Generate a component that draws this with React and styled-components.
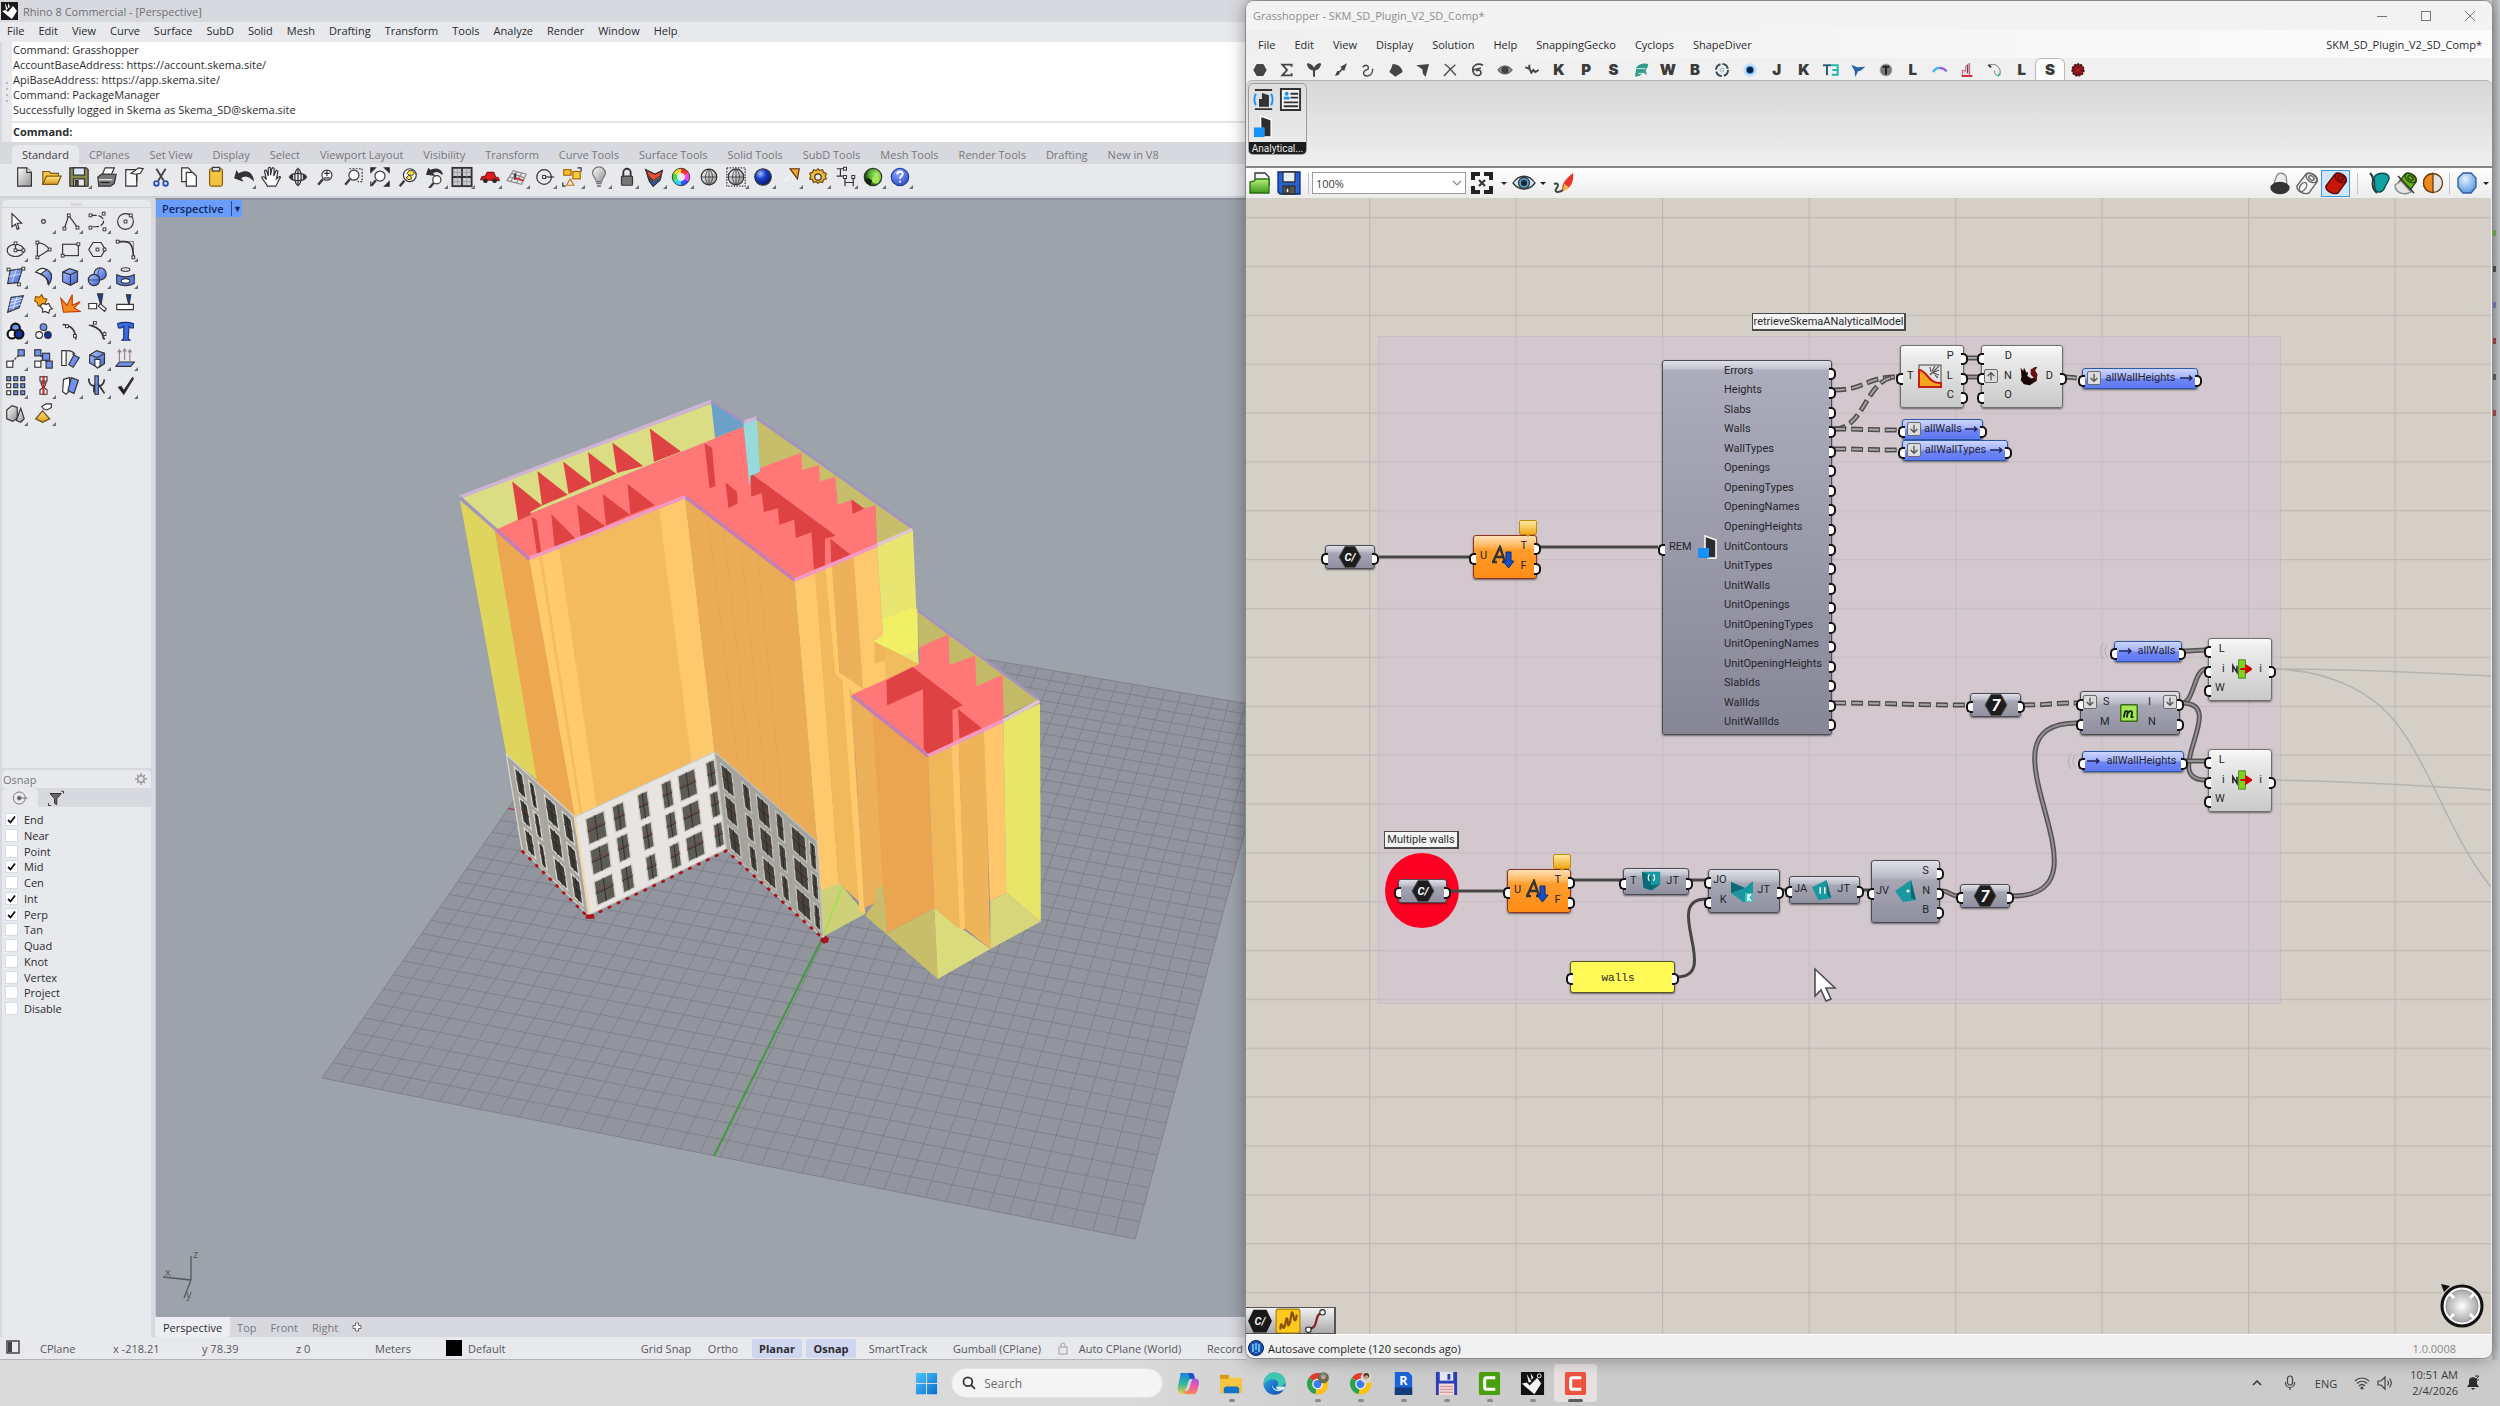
import React from "react";
import styled, { createGlobalStyle, css } from "styled-components";

const Page = createGlobalStyle`
  * { box-sizing: border-box; }
  body { margin: 0; overflow: hidden; }
  body, button, input, select {
    font-family: "Open Sans", "Noto Sans", sans-serif;
    font-size: 11px;
  }
  button { border: 0; padding: 0; background: none; color: inherit; white-space: nowrap; }
`;

/* ---------- shell ---------- */

const Screen = styled.div`
  height: 100vh;
  display: flex;
  flex-direction: column;
  background: #d6d6d8;
  color: #2b2b2e;
`;

const Desktop = styled.div`
  flex: 1;
  min-height: 0;
  display: flex;
`;

const BehindEdge = styled.div`
  width: 8px;
  background: linear-gradient(90deg, #aeb0b5, #c9cbd0);
  display: flex;
  flex-direction: column;
  align-items: flex-start;
  gap: 30px;
  padding-top: 230px;
`;

const EdgeChip = styled.i`
  width: 4px;
  height: 6px;
  background: ${p => p.$color};
`;

/* ---------- Rhino ---------- */

const Rhino = styled.section`
  flex: 1 1 0;
  min-width: 0;
  overflow: hidden;
  display: flex;
  flex-direction: column;
  background: #d8d9de;
  border-bottom: 1px solid #b4b5b9;
`;

const RhinoTitle = styled.header`
  height: 22px;
  display: flex;
  align-items: center;
  gap: 5px;
  padding-left: 1px;
  color: #6f7074;
`;

const MenuBar = styled.nav`
  display: flex;
  align-items: center;
  height: 20px;
  padding: 0 0 3px 7px;
  gap: 14px;
  background: #e8e9ed;
  flex: none;
`;

const Console = styled.div`
  flex: none;
  height: 100px;
  display: flex;
  background: #fff;
`;

const Grip = styled.div`
  width: 12px;
  flex: none;
  background: #e8e9ed;
  border-left: 2px solid #d8d9de;
  display: flex;
  flex-direction: column;
  align-items: center;
  justify-content: center;
  gap: 4px;

  i {
    width: 2px;
    height: 2px;
    background: #b9bac0;
  }
`;

const ConsoleBody = styled.div`
  flex: 1;
  display: flex;
  flex-direction: column;
`;

const History = styled.div`
  height: 81px;
  line-height: 15px;
  white-space: pre;
  border-bottom: 2px solid #e3e5ea;
  padding-left: 1px;
`;

const Prompt = styled.label`
  flex: 1;
  display: flex;
  align-items: center;
  gap: 6px;
  padding: 0 0 2px 1px;
  font-weight: 700;

  input {
    flex: 1;
    border: 0;
    outline: 0;
    background: none;
  }
`;

const TabStrip = styled.div`
  height: 22px;
  flex: none;
  display: flex;
  padding: 3px 0 0 12px;
  color: #77787d;
`;

const TabButton = styled.button`
  padding: 0 10px;
  border-radius: 5px 5px 0 0;
  ${p => p.$on && css`
    background: #e8e9ed;
    color: #3d3e42;
  `}
`;

const ToolStrip = styled.div`
  height: 34px;
  flex: none;
  background: #e8e9ed;
  border-bottom: 2px solid #cfd0d5;
  padding: 0 0 6px 11px;
`;

const ToolRow = styled.div`
  display: flex;
  width: ${p => p.$width}px;
  height: 100%;

  > * { flex: 1; }
`;

const ToolButton = styled.button`
  display: flex;
  align-items: center;
  justify-content: center;
  position: relative;

  svg {
    width: ${p => p.$size || 24}px;
    height: ${p => p.$size || 24}px;
    flex: none;
  }

  ${p => p.$more && css`
    &::after {
      content: "";
      position: absolute;
      right: 1px;
      bottom: 1px;
      border: 2px solid #6d6e72;
      border-top-color: transparent;
      border-left-color: transparent;
    }
  `}
`;

const RhinoMain = styled.div`
  flex: 1;
  min-height: 0;
  display: flex;
`;

const Side = styled.aside`
  width: 155px;
  flex: none;
  padding: 2px 4px 0 2px;
  display: flex;
  flex-direction: column;
`;

const Palette = styled.div`
  background: #e8e9ed;
  border-radius: 5px 5px 0 0;
  height: 568px;
`;

const PaletteGrip = styled.div`
  height: 8px;
  border-bottom: 1px solid #d3d4d9;
  text-align: center;
  font-size: 8px;
  line-height: 8px;
  color: #a5a6ab;
`;

const PaletteGrid = styled.div`
  display: grid;
  grid-template-columns: repeat(5, 1fr);
  grid-auto-rows: 1fr;
  width: 137px;
  height: 219px;
`;

const PanelTitle = styled.div`
  display: flex;
  align-items: center;
  justify-content: space-between;
  height: 18px;
  margin-top: 2px;
  padding: 0 4px 0 1px;
  background: #e8e9ed;
  border-radius: 5px 5px 0 0;
  color: #77787d;
`;

const PanelTabs = styled.div`
  display: flex;
  height: 19px;

  svg { width: 18px; height: 18px; }
`;

const PanelTab = styled.div`
  width: 36px;
  display: flex;
  align-items: center;
  justify-content: center;
  border-radius: 5px 5px 0 0;
  background: ${p => (p.$on ? "#e8e9ed" : "none")};
`;

const Snaps = styled.div`
  flex: 1;
  background: #e8e9ed;
  padding: 5px 0 0 3px;
`;

const SnapList = styled.div`
  height: 204px;
  display: flex;
  flex-direction: column;
  justify-content: space-between;
`;

const Snap = styled.label`
  display: flex;
  align-items: center;
  gap: 6px;
  height: 15px;

  input {
    appearance: none;
    margin: 0;
    width: 13px;
    height: 13px;
    background: #fff;
    border: 1px solid #d5dbe9;
  }

  input:checked {
    background: #fff url("data:image/svg+xml,%3Csvg xmlns='http://www.w3.org/2000/svg' viewBox='0 0 11 11'%3E%3Cpath d='M2 6l2.5 2.5L9 2.5' fill='none' stroke='%23111' stroke-width='1.8'/%3E%3C/svg%3E") center / 11px no-repeat;
  }
`;

const ViewColumn = styled.div`
  flex: 1;
  min-width: 0;
  display: flex;
  flex-direction: column;
`;

const Viewport = styled.div`
  flex: 1;
  min-height: 0;
  position: relative;
  overflow: hidden;
  background: #9da3ab;
  border-top: 2px solid #8d939f;
  border-left: 1px solid #c9ccd3;
`;

const ViewLabel = styled.button`
  position: absolute;
  top: 0;
  left: 0;
  height: 17px;
  display: flex;
  align-items: center;
  background: #6a9cfb;
  color: #10285c;
  font-weight: 600;
  padding-left: 6px;

  span {
    margin-left: 8px;
    width: 11px;
    border-left: 1px solid #274b8e;
    font-size: 9px;
    line-height: 15px;
  }
`;

const Scene = styled.svg`
  position: absolute;
  inset: 0;
  width: 100%;
  height: 100%;
`;

const ViewTabs = styled.div`
  height: 20px;
  flex: none;
  display: flex;
  color: #77787d;

  button { padding: 0 7px; }
  button:first-child {
    padding: 0 8px;
    background: #eceef4;
    color: #2b2b2e;
    border-radius: 0 0 4px 4px;
  }
`;

const StatusBar = styled.footer`
  height: 22px;
  flex: none;
  display: flex;
  align-items: center;
  background: #e8e9ed;
  color: #56575b;
  white-space: nowrap;
`;

const StatusCell = styled.span`
  width: ${p => p.$w}px;
  flex: none;
`;

const LayerCell = styled.span`
  width: 192px;
  flex: none;
  display: flex;
  align-items: center;
  gap: 6px;

  i {
    width: 16px;
    height: 16px;
    background: #000;
  }
`;

const Modes = styled.div`
  display: flex;
  align-items: center;
  height: 100%;
`;

const Mode = styled.button`
  height: 19px;
  width: ${p => p.$w}px;
  margin-right: 4px;
  ${p => p.$on && css`
    background: #cfd6f0;
    color: #2b2b2e;
    font-weight: 700;
    border-radius: 2px;
  `}
`;

/* ---------- Grasshopper ---------- */

const Hopper = styled.section`
  flex: 1 1 0;
  min-width: 0;
  position: relative;
  margin: 1px 0 2px;
  display: flex;
  flex-direction: column;
  background: #f0f0f0;
  border-radius: 8px;
  overflow: hidden;
  box-shadow: 0 0 18px rgba(0, 0, 0, 0.4), 0 0 0 1px #a9a9ac;
`;

const HopperTitle = styled.header`
  height: 29px;
  flex: none;
  display: flex;
  align-items: center;
  justify-content: space-between;
  padding: 0 10px 0 7px;
  background: #f3f3f3;
  color: #8d8d8d;
`;

const WindowButtons = styled.div`
  display: flex;
  gap: 20px;

  button { width: 24px; height: 24px; display: flex; align-items: center; justify-content: center; }
`;

const HopperMenu = styled.nav`
  height: 28px;
  flex: none;
  display: flex;
  align-items: center;
  gap: 19px;
  padding: 0 10px 0 12px;
  background: linear-gradient(90deg, #efefef, #fcfcfc);

  span { margin-left: auto; }
`;

const Categories = styled.div`
  height: 22px;
  flex: none;
`;

const Category = styled(ToolButton)`
  height: 22px;
  padding-top: 2px;
  ${p => p.$on && css`
    background: #fbfbfb;
    border: 1px solid #b9b9b9;
    border-bottom: 0;
    border-radius: 6px 6px 0 0;
    padding: 0;
  `}
`;

const CategoryLetter = styled.b`
  font: 900 15px/20px Inter, sans-serif;
  color: #3a3a3a;
`;

const Ribbon = styled.div`
  height: 88px;
  flex: none;
  background: linear-gradient(#d7d7d7, #efefef);
  border-top: 1px solid #b2b2b2;
  border-bottom: 2px solid #868686;
  border-radius: 6px 6px 0 0;
  padding: 2px;
`;

const RibbonGroup = styled.div`
  width: 59px;
  height: 72px;
  border: 1px solid #9c9c9c;
  border-radius: 5px;
  background: linear-gradient(#dedede, #ececec);
  display: flex;
  flex-direction: column;
  overflow: hidden;

  > div {
    flex: 1;
    padding: 2px 1px;
    display: grid;
    grid-template-columns: 27px 27px;
    grid-auto-rows: 27px;
  }

  > span {
    height: 14px;
    flex: none;
    background: #1c1c1c;
    color: #e8e8e8;
    font: 10px/13px Roboto, sans-serif;
    text-align: center;
  }
`;

const CanvasBar = styled.div`
  height: 30px;
  flex: none;
  display: flex;
  align-items: center;
  background: linear-gradient(#fff, #ececec);
`;

const BarButton = styled.button`
  width: ${p => p.$w || 27}px;
  height: 27px;
  display: flex;
  align-items: center;
  justify-content: center;
  ${p => p.$on && "border: 1px solid #3f97e0; background: #cfe6fa;"}
  ${p => p.$push && "margin-left: auto;"}

  svg { width: 24px; height: 24px; }
`;

const Caret = styled.i`
  width: 12px;
  display: flex;
  justify-content: center;

  &::before {
    content: "";
    border: 3px solid transparent;
    border-top-color: #222;
    border-bottom: 0;
  }
`;

const Divider = styled.i`
  width: 1px;
  height: 21px;
  margin: 0 ${p => p.$gap || 4}px;
  background: #c2c2c2;
`;

const Zoom = styled.div`
  position: relative;
  width: 154px;
  height: 22px;

  select {
    appearance: none;
    width: 100%;
    height: 100%;
    border: 1px solid #9a9a9a;
    border-radius: 0;
    background: #fff;
    padding: 0 3px;
    color: #3a3a3a;
  }

  svg { position: absolute; right: 4px; top: 6px; width: 10px; height: 10px; }
`;

const Canvas = styled.main`
  flex: 1;
  min-height: 0;
  position: relative;
  overflow: hidden;
  background: #d4d0c8;
  margin-right: 1px;
  font-family: Roboto, sans-serif;
`;

const CanvasGroup = styled.div`
  position: absolute;
  left: 132px;
  top: 138px;
  width: 903px;
  height: 668px;
  background: rgba(208, 192, 212, 0.5);
  border: 1px solid rgba(190, 175, 200, 0.4);
`;

const CanvasSvg = styled.svg`
  position: absolute;
  inset: 0;
  width: 100%;
  height: 100%;
`;

const tones = {
  steel: "border-color: #4c4c56; background: linear-gradient(#e0e0e8 0, #bcbcc8 26%, #a6a6b4 32%, #8f8fa0);",
  tall: "border-color: #4c4c56; background: linear-gradient(#e0e0e8 0, #c4c4d0 8px, #acacbc 9px, #868696);",
  light: "border-color: #6f6f6f; background: linear-gradient(#fafafa, #ececec 10px, #c9c9c9);",
  blue: "border-color: #2c5aa6; background: linear-gradient(#ccd6ff, #a2b2ff 9px, #6f86f8 10px, #5f78f0);",
  orange: "border-color: #8a3324; background: linear-gradient(#ffe0b8, #ffb860 10px, #ff9c2c 14px, #ff8c14);",
  yellow: "border-color: #55552c; background: #fffa55;"
};

const NodeBox = styled.div`
  position: absolute;
  left: ${p => p.$x}px;
  top: ${p => p.$y}px;
  width: ${p => p.$w}px;
  height: ${p => p.$h}px;
  border: 1px solid;
  border-radius: 3px;
  box-shadow: 0 1px 2px rgba(0, 0, 0, 0.5);
  display: flex;
  align-items: stretch;
  font-size: 11px;
  line-height: 14px;
  color: #26262c;
  ${p => tones[p.$tone]}
`;

const Ports = styled.div`
  display: flex;
  flex-direction: column;
  padding-bottom: 2px;
`;

const inPort = css`
  justify-content: flex-end;
  padding: 0 3px 0 ${p => p.$pad || 0}px;
  gap: 6px;

  &::after {
    left: -5px;
    border-right: 0;
    border-radius: 5px 0 0 5px;
  }
`;

const outPort = css`
  padding: 0 ${p => p.$pad || 0}px 0 3px;
  gap: 12px;

  &::after {
    right: -5px;
    border-left: 0;
    border-radius: 0 5px 5px 0;
  }
`;

const Port = styled.div`
  flex: 1;
  position: relative;
  display: flex;
  align-items: center;

  &::after {
    content: "";
    position: absolute;
    top: calc(50% - 3px);
    width: 5px;
    height: 8px;
    background: #fff;
    border: 2px solid #141414;
  }

  ${p => (p.$side === "in" ? inPort : outPort)}
`;

const Middle = styled.div`
  flex: 1;
  display: flex;
  align-items: center;
  justify-content: center;
  padding-bottom: 1px;

  svg { width: ${p => p.$size || 24}px; height: ${p => p.$size || 24}px; flex: none; }
`;

const Modifier = styled.i`
  width: 14px;
  height: 14px;
  border: 1px solid #6a6a6a;
  border-radius: 2px;
  background: #dcdcdc;
  display: flex;
  align-items: center;
  justify-content: center;

  svg { width: 10px; height: 10px; ${p => p.$up && "transform: rotate(180deg);"} }
`;

const Halo = styled.div`
  position: absolute;
  left: 139px;
  top: 655px;
  width: 74px;
  height: 75px;
  border-radius: 50%;
  background: #fb0022;
`;

const Scribble = styled.div`
  position: absolute;
  left: ${p => p.$x}px;
  top: ${p => p.$y}px;
  width: ${p => p.$w}px;
  height: 18px;
  border: 1px solid #4a4a4a;
  border-width: 1px 2px 2px 1px;
  background: #f4f4f4;
  font-size: 11px;
  line-height: 15px;
  text-align: center;
  white-space: nowrap;

  &::after {
    content: "";
    position: absolute;
    z-index: -1;
    top: 12px;
    left: calc(50% - 4px);
    width: 7px;
    height: 7px;
    background: #f4f4f4;
    border: 1px solid #4a4a4a;
    border-width: 0 1px 1px 0;
    transform: rotate(45deg);
  }
`;

const Balloon = styled.div`
  position: absolute;
  left: ${p => p.$x}px;
  top: ${p => p.$y}px;
  width: 18px;
  height: 15px;
  border: 1px solid #c08a10;
  border-radius: 2px;
  background: linear-gradient(#ffeaa0, #f0a818);

  &::after {
    content: "";
    position: absolute;
    top: 13px;
    left: 5px;
    border: 3px solid transparent;
    border-top-color: #d8940c;
    border-bottom: 0;
  }
`;

const PanelText = styled.span`
  flex: 1;
  align-self: center;
  text-align: center;
  padding: 2px 9px 0 0;
  font-family: "Liberation Mono", monospace;
`;

const Pointer = styled.svg`
  position: absolute;
  left: 566px;
  top: 768px;
  width: 26px;
  height: 36px;
`;

const Tray = styled.div`
  position: absolute;
  left: 0;
  bottom: 0;
  height: 27px;
  width: 90px;
  display: flex;
  background: linear-gradient(#f2f2f2, #a9a9a9);
  border: 1px solid #555;
  border-width: 1px 2px 1px 0;

  svg { width: 28px; height: 26px; }
`;

const Compass = styled.svg`
  position: absolute;
  right: 7px;
  bottom: 5px;
  width: 46px;
  height: 48px;
`;

const HopperStatus = styled.footer`
  height: 24px;
  flex: none;
  display: flex;
  align-items: center;
  gap: 4px;
  padding: 3px 36px 0 2px;
  border-top: 1px solid #fff;
  color: #1f1f1f;

  span:last-child { margin-left: auto; color: #8a8a8a; }
  svg { width: 16px; height: 16px; }
`;

/* ---------- taskbar ---------- */

const Taskbar = styled.footer`
  height: 46px;
  flex: none;
  display: grid;
  grid-template-columns: 1fr auto 1fr;
  align-items: center;
  background: linear-gradient(90deg, #dadada 45%, #cbcbcb 55%);
  color: #3b3b3b;
`;

const Apps = styled.div`
  display: flex;
  align-items: center;
`;

const AppButton = styled.button`
  width: ${p => p.$w || 43}px;
  height: 38px;
  display: flex;
  flex-direction: column;
  align-items: center;
  justify-content: center;
  gap: 4px;
  padding-top: 8px;
  border-radius: 4px;
  ${p => p.$on && "background: #e6e1e0;"}

  svg { width: 25px; height: 24px; }
  &::after {
    content: "";
    width: ${p => (p.$on ? 15 : 6)}px;
    height: 3px;
    border-radius: 2px;
    background: ${p => (p.$on ? "#5c5c5c" : p.$open ? "#8a8a8a" : "transparent")};
  }
`;

const Search = styled.label`
  width: 212px;
  height: 30px;
  margin: 0 4px 0 2px;
  padding: 0 10px;
  display: flex;
  align-items: center;
  gap: 8px;
  border-radius: 15px;
  background: #f4f4f4;
  border: 1px solid #e2e2e2;

  svg { width: 16px; height: 16px; }
  input {
    width: 100%;
    border: 0;
    outline: 0;
    padding: 0;
    background: none;
    font-size: 12px;
  }
  input::placeholder { color: #6a6a6a; opacity: 1; }
`;

const TrayIcons = styled.div`
  justify-self: end;
  display: flex;
  align-items: center;
  padding-right: 19px;
  gap: 17px;

  svg { width: 16px; height: 16px; }
`;

const Pair = styled.div`
  display: flex;
  align-items: center;
  gap: 7px;
`;

const Clock = styled.div`
  text-align: right;
  line-height: 16px;
`;

/* ---------- icons ---------- */

const I = ({ children, box = "0 0 24 24", ...rest }) => (
  <svg viewBox={box} fill="none" stroke="#333" strokeWidth="1.3" {...rest}>{children}</svg>
);

const Dot = ({ x, y, f = "#fff" }) => (
  <rect x={x - 1.6} y={y - 1.6} width="3.2" height="3.2" fill={f} strokeWidth="1.1" />
);

const HiddenSvg = styled.svg`
  position: absolute;
`;

const Defs = () => (
  <HiddenSvg width="0" height="0">
    <defs>
      <linearGradient id="steel" x1="0" y1="0" x2="1" y2="1">
        <stop offset="0" stopColor="#fff" /><stop offset="1" stopColor="#8f8f8f" />
      </linearGradient>
      <linearGradient id="gold" x1="0" y1="0" x2="0" y2="1">
        <stop offset="0" stopColor="#ffe68a" /><stop offset="1" stopColor="#d99a1c" />
      </linearGradient>
      <linearGradient id="leaf" x1="0" y1="0" x2="0" y2="1">
        <stop offset="0" stopColor="#b6ef7a" /><stop offset="1" stopColor="#3d9a1c" />
      </linearGradient>
      <linearGradient id="azure" x1="0" y1="0" x2="1" y2="1">
        <stop offset="0" stopColor="#b3c8ff" /><stop offset="1" stopColor="#3c5fd6" />
      </linearGradient>
      <linearGradient id="copilotLeft" x1="0" y1="0" x2="0" y2="1">
        <stop offset="0" stopColor="#1a7fe0" /><stop offset=".5" stopColor="#2cb8a0" /><stop offset="1" stopColor="#f0d040" />
      </linearGradient>
      <linearGradient id="copilotRight" x1="0" y1="0" x2="0" y2="1">
        <stop offset="0" stopColor="#a058f0" /><stop offset=".5" stopColor="#ee58a8" /><stop offset="1" stopColor="#ff8a4a" />
      </linearGradient>
      <linearGradient id="windows" x1="0" y1="0" x2="1" y2="1">
        <stop offset="0" stopColor="#4cc8f8" /><stop offset="1" stopColor="#0a6cd0" />
      </linearGradient>
      <linearGradient id="edge" x1="0" y1="0" x2="1" y2="1">
        <stop offset="0" stopColor="#39c4e8" /><stop offset=".5" stopColor="#1a74cc" />
        <stop offset="1" stopColor="#0f4fa8" />
      </linearGradient>
      <radialGradient id="ballBlue" cx=".35" cy=".3" r=".8">
        <stop offset="0" stopColor="#9fc0ff" /><stop offset=".4" stopColor="#1a3fd0" /><stop offset="1" stopColor="#06104f" />
      </radialGradient>
      <radialGradient id="ballGreen" cx=".7" cy=".4" r=".7">
        <stop offset="0" stopColor="#b8f07a" /><stop offset=".6" stopColor="#4fae28" /><stop offset="1" stopColor="#0c2a08" />
      </radialGradient>
      <radialGradient id="ballSky" cx=".4" cy=".3" r=".8">
        <stop offset="0" stopColor="#e4f2ff" /><stop offset="1" stopColor="#4b8fdd" />
      </radialGradient>
      <radialGradient id="ballHelp" cx=".4" cy=".3" r=".8">
        <stop offset="0" stopColor="#8fa8ff" /><stop offset="1" stopColor="#2743c4" />
      </radialGradient>
      <radialGradient id="knob">
        <stop offset="0" stopColor="#fff" /><stop offset="1" stopColor="#a9a9a9" />
      </radialGradient>
    </defs>
  </HiddenSvg>
);

const Lens = ({ cx = 13, cy = 10, r = 5.5 }) => (
  <g stroke="#3a3a3a">
    <circle cx={cx} cy={cy} r={r} fill="#fafafa" />
    <path d={`M${cx - r + 1} ${cy + r - 1}l-5 6`} strokeWidth="2.6" />
  </g>
);

const sheet = <path d="M4 2h10l5 5v15H4z" fill="url(#steel)" />;
const wireBall = (
  <g>
    <circle cx="12" cy="12" r="8.5" fill="url(#steel)" />
    <path d="M12 3.5v17M3.5 12h17M12 3.5c-5 4-5 13 0 17M12 3.5c5 4 5 13 0 17" strokeWidth=".9" />
  </g>
);

const standardTools = [
  [0, <>{sheet}<path d="M14 2v5h5" fill="#fff" /></>],
  [0, <><path d="M2 20V6h7l2 2h8v3" fill="#f4c64a" stroke="#7d5a10" /><path d="M2 20l4-9h16l-4 9z" fill="url(#gold)" stroke="#7d5a10" /></>],
  [1, <><path d="M2 2h18l2 2v18H2z" fill="#8a8a4c" /><path d="M6 2h12v8H6z" fill="#dde6ff" /><path d="M6 14h12v8H6z" fill="#e9e9e9" /><path d="M8 16h3v5H8z" fill="#444" /></>],
  [0, <><path d="M7 9L10 2h10l-3 7z" fill="#fff" /><path d="M2 12l4-3h16l-2 10-4 3H3z" fill="#777" /><path d="M3 15h15" stroke="#eee" /><path d="M5 18h10" stroke="#222" /></>],
  [0, <><path d="M3 4h12v18H3z" fill="#f7f7f7" /><path d="M9 8l8-6 5 1-3 5-5 1z" fill="#fff" /><path d="M15 9v8" /></>],
  [0, <><path d="M7 3l8 13M17 3L9 16" stroke="#444" strokeWidth="2" /><circle cx="7" cy="19" r="2.5" stroke="#2a50b8" strokeWidth="2" /><circle cx="17" cy="19" r="2.5" stroke="#2a50b8" strokeWidth="2" /></>],
  [0, <><path d="M4 2h7l3 3v12H4z" fill="#fff" /><path d="M9 7h7l4 4v11H9z" fill="#fff" /></>],
  [0, <><rect x="5" y="3" width="14" height="19" rx="2" fill="#f5c242" stroke="#8a5c10" /><rect x="8" y="1.5" width="8" height="4" fill="#ddd" /></>],
  [1, <path d="M2 13l2-7 2 3c6-5 14-3 16 6-5-5-10-5-14-2l2 3z" fill="#333" />],
  [0, <path d="M8 22c-1-4-6-7-6-10 2-1 4 1 5 3L5 6c0-2 2-2 2.5 0L9 11V3c0-2 2.5-2 2.5 0v7L13 3c.5-2 2.5-1 2.5 0L15 11l2-5c1-2 2.5-1 2.5 0L18 14c3-3 5-3 4-1-3 4-3 7-5 9z" fill="#fff" />],
  [0, <><ellipse cx="12" cy="12" rx="9" ry="4" /><ellipse cx="12" cy="12" rx="3.5" ry="9" /><path d="M12 2v20" /><path d="M3 12l3-2v4zM21 12l-3 2v-4z" fill="#333" /></>],
  [0, <><Lens /><path d="M10 8h6M13 5v6M10 13h6" /></>],
  [0, <><path d="M8 3h14v14h-5" strokeDasharray="2 1.5" /><Lens /></>],
  [0, <><Lens cx={12} cy={11} /><path d="M2 2h5L2 7zM22 2v5l-5-5zM22 22h-5l5-5zM2 22v-5" fill="#222" /></>],
  [0, <><Lens cx={14} r={7} /><path d="M13 5l4 0 2 3-2 2h-4l-2-2zM13 10l2 1 1 3-3 1-3-2z" fill="#ffe23c" strokeWidth="1" /></>],
  [1, <><Lens cy={15} cx={14} r={4.5} /><path d="M3 9l2-6 2 2c5-3 11-2 13 4-4-4-8-4-11-1l2 2z" fill="#333" /></>],
  [1, <><rect x="1.5" y="2" width="21" height="20" fill="#c9c9ce" strokeWidth="2" /><path d="M12 2v20M2 12h20" strokeWidth="2" /><path d="M7 3v18M17 3v18M3 7h18M3 17h18" stroke="#888" strokeWidth=".6" /></>],
  [1, <><path d="M2 15c0-3 2-4 5-4l2-4h7l2 5c3 0 4 1 4 4z" fill="#e21c1c" stroke="#8a0f0f" /><circle cx="7" cy="16" r="2" fill="#222" /><circle cx="17" cy="16" r="2" fill="#222" /></>],
  [1, <><path d="M1 16L8 5l14 4-5 11zM4 12l15 4M6 8l14 5M5 17l7-11M11 19l6-11" stroke="#8d8d8d" /><path d="M10 15V8" strokeWidth="2" /><path d="M10 13l9 3" stroke="#d42a2a" strokeWidth="2" /></>],
  [1, <><circle cx="11" cy="12" r="8" /><path d="M11 12h11" /><Dot x={11} y={12} /></>],
  [1, <><rect x="3" y="4" width="8" height="6" fill="#ffbc2e" stroke="#a86a00" /><rect x="13" y="6" width="8" height="8" fill="#ffc93c" stroke="#a86a00" /><path d="M6 21l4-7 4 7z" stroke="#c47a1a" /><path d="M18 2h4v4M2 18v4h3" /></>],
  [1, <><path d="M9 17c0-4-4-5-4-9a7 7 0 0114 0c0 4-4 5-4 9z" fill="url(#steel)" stroke="#777" /><path d="M9 19h6M10 22h4" stroke="#777" strokeWidth="2" /></>],
  [1, <><path d="M8 11V7a4 4 0 018 0v4" strokeWidth="2" /><rect x="6" y="11" width="12" height="10" rx="1" fill="#777" /></>],
  [1, <><path d="M3 4l10 5 8-4-2 9-8 8-5-8z" fill="#f4f6ff" /><path d="M3 4l10 5 8-4-2 6-8 5-5-5z" fill="#ef4d2e" /><path d="M6 13l5 5 8-5-1 3-7 6-4-5z" fill="#2c62d8" /></>],
  [1, <g strokeWidth="5"><path d="M12 5a7 7 0 016 3.5" stroke="#ff2a2a" /><path d="M18 8.5a7 7 0 010 7" stroke="#ff3cf0" /><path d="M18 15.5a7 7 0 01-6 3.5" stroke="#3c4cff" /><path d="M12 19a7 7 0 01-6-3.5" stroke="#28d8f0" /><path d="M6 15.5a7 7 0 010-7" stroke="#3ce03c" /><path d="M6 8.5A7 7 0 0112 5" stroke="#ffd82a" /><circle cx="12" cy="12" r="9.5" strokeWidth="1" /></g>],
  [0, wireBall],
  [1, <><rect x="2" y="2" width="20" height="20" strokeDasharray="1.5 1.5" />{wireBall}</>],
  [1, <circle cx="12" cy="12" r="9" fill="url(#ballBlue)" />],
  [1, <><path d="M3 18c4 0 8-4 9-10z" fill="#f4f4f4" stroke="none" /><path d="M11 3h10l-2 11z" fill="#f5a02a" stroke="#54340a" /></>],
  [1, <><path d="M12 3l2 2 3-1 1 3 3 1-1 3 1 3-3 1-1 3-3-1-2 2-2-2-3 1-1-3-3-1 1-3-1-3 3-1 1-3 3 1z" fill="#f1b83a" stroke="#6d4808" /><circle cx="12" cy="12" r="3.5" fill="#e9e9ed" /></>],
  [1, <><path d="M3 3h8M7 3v8M3 11h8M12 13v9M21 13v9M12 18h9" /><Dot x={12} y={3} /><Dot x={12} y={12} /><Dot x={21} y={12} /></>],
  [1, <><circle cx="12" cy="12" r="9.5" fill="url(#ballGreen)" /><path d="M3 15a10 10 0 006 6l2-5-4-3z" fill="#10240c" stroke="none" /><circle cx="15" cy="15" r="4" fill="#a4e25a" stroke="none" /></>],
  [1, <><circle cx="12" cy="12" r="9.5" fill="url(#ballHelp)" stroke="#2743a4" /><path d="M9 9c0-4 6-4 6 0 0 2-3 2-3 5M12 16v2" stroke="#fff" strokeWidth="2" /></>]
];

const B = "#6f92f2";
const paletteTools = [
  [0, <path d="M8 3v15l4-3 2 6 2-1-2-6h5z" fill="#fff" />],
  [1, <circle cx="12" cy="12" r="2.2" />],
  [1, <><path d="M5 20l5-15 10 14" /><Dot x={5} y={20} /><Dot x={10} y={5} /><Dot x={20} y={19} /></>],
  [1, <><path d="M4 5h6c12 0 12 13 0 13H4" strokeDasharray="7 2" /><Dot x={4} y={5} /><Dot x={4} y={19} /><Dot x={19} y={3} /><Dot x={20} y={21} /></>],
  [1, <><circle cx="12" cy="12" r="9" /><Dot x={12} y={12} /><Dot x={18} y={5} /></>],
  [1, <><ellipse cx="12" cy="13" rx="9.5" ry="7" /><path d="M12 5v8h9" /><Dot x={12} y={13} /><Dot x={21} y={13} /><Dot x={12} y={5} /></>],
  [1, <><path d="M5 4v17M5 4c7 1 12 4 14 9M5 21l14-9" /><Dot x={5} y={4} /><Dot x={5} y={21} /><Dot x={19} y={12} /></>],
  [1, <><rect x="3" y="6" width="18" height="13" /><Dot x={3} y={19} /><Dot x={21} y={6} /></>],
  [1, <><path d="M7 4h9l5 8-5 8H7l-5-8z" /><Dot x={12} y={12} /><Dot x={20} y={12} /></>],
  [1, <><path d="M3 3h8c7 0 10 5 10 18" strokeWidth="2" /><path d="M11 3h10v10" strokeWidth=".7" /><Dot x={3} y={3} /><Dot x={21} y={21} /></>],
  [1, <><path d="M6 5l14-2-5 16-12 1z" fill="url(#azure)" /><path d="M13 4l-5 15M4 12l14-3" stroke="#fff" strokeWidth=".7" /><Dot x={4} y={4} /><Dot x={21} y={3} /><Dot x={16} y={21} /></>],
  [1, <><path d="M3 7c5-5 9-5 12-3l6 5-4 12c0-8-5-11-14-14z" fill="#fff" /><path d="M9 9l7-5c6 4 7 10 2 17 0-6-3-9-9-12z" fill="url(#azure)" /></>],
  [1, <><path d="M3 7l8-4 9 3v12l-8 4-9-4z" fill="url(#azure)" /><path d="M3 7l9 3v12M12 10l8-4" /></>],
  [1, <><circle cx="15" cy="9" r="7" fill="url(#azure)" /><circle cx="8" cy="16" r="6.5" fill="url(#azure)" /><path d="M15 2c-3 4-3 10 0 14M2 16h13" stroke="#234" strokeWidth=".8" /></>],
  [1, <><ellipse cx="12" cy="4" rx="5" ry="2" /><path d="M2 10c6 3 14 3 20 0v10c-6 3-14 3-20 0z" fill="#5c80ee" /><ellipse cx="12" cy="17" rx="5" ry="2.5" fill="#fff" /></>],
  [1, <><path d="M7 5l14-2-5 14-13 5z" fill="url(#azure)" /><path d="M14 4l-5 15M5 13l14-4M6 9l14-3M4 17l14-4" stroke="#fff" strokeWidth=".8" /></>],
  [1, <><path d="M3 4l4 1 3-3 2 4 4 1-2 4 1 4-5-1-4 1-1-4-3-2z" fill="#f5a01c" stroke="#8a5200" /><path d="M11 12l4 1 3-1 2 4 2 2-3 1-1 4-4-2-3 1v-4l-3-3z" fill="#fff" /></>],
  [0, <path d="M4 22L1 6l7 8 6-12v12l9-4-7 7 7 4z" fill="#f58a1c" stroke="#c03c08" />],
  [0, <><path d="M12 1h6l-2 13z" fill="#1c3fb0" /><path d="M2 12h9v6H2zM13 15l7 6 2-3-7-6z" fill="#fff" /></>],
  [0, <><path d="M13 2h5l-2 12z" fill="#1c3fb0" /><path d="M2 13h19v6H2z" fill="#fff" /></>],
  [1, <g strokeWidth="2.5" stroke="#111"><circle cx="12" cy="8" r="5" fill={B} /><circle cx="8" cy="15" r="5" fill="#fff" /><circle cx="16" cy="15" r="5" fill="#12309a" /></g>],
  [0, <><circle cx="12" cy="7" r="3.8" fill={B} /><circle cx="7" cy="16" r="3.8" fill="#fff" /><circle cx="17" cy="16" r="3.8" fill="#12309a" /></>],
  [0, <><path d="M3 4c10 1 15 7 15 17" strokeWidth="1.8" /><Dot x={8} y={6} /><Dot x={17} y={17} /></>],
  [1, <><path d="M4 5c9 2 14 8 15 16" strokeWidth="1.8" /><path d="M2 5h7M20 12v9" strokeDasharray="2 1.5" /><Dot x={9} y={2} /><Dot x={20} y={15} /></>],
  [0, <path d="M3 3c6-2 12-2 18 0v5h-3l-2-2-1 14 2 2H8l2-2V6L7 8H4z" fill="#3f6ae0" stroke="#16307c" />],
  [1, <><path d="M8 16l9-9" strokeDasharray="3 1" /><rect x="15" y="2" width="7" height="7" fill={B} /><rect x="2" y="15" width="7" height="7" fill="#fff" /></>],
  [0, <><path d="M6 6l12 12M18 6L6 18" /><rect x="2" y="2" width="7" height="7" fill={B} /><rect x="11" y="6" width="8" height="8" fill={B} /><rect x="2" y="15" width="7" height="7" fill="#fff" /><rect x="15" y="15" width="7" height="8" fill={B} /></>],
  [0, <><path d="M2 3h5v17H2z" fill="#fff" /><path d="M10 19l6-11 6 3-7 11z" fill={B} /><path d="M8 3c5 0 7 1 9 4M17 7h-3" /></>],
  [1, <><path d="M3 8l8-5 9 3v12l-6 4-4-1-7-4z" fill="url(#azure)" /><path d="M3 8l9 3 8-5" /><path d="M9 13h6v7l-3 3-3-3z" fill="#fff" /></>],
  [1, <><path d="M5 3v12M11 2v12M17 3v12M3 5l2-3 2 3M9 4l2-3 2 3M15 5l2-3 2 3" stroke="#9a7f7f" /><path d="M5 16h17l-4 5H1z" fill={B} /></>],
  [1, [2, 10, 18].map(y => [2, 10, 18].map(x => <rect key={`${x} ${y}`} x={x} y={y} width="4.5" height="4.5" fill={x < 9 && y > 9 ? "#fff" : B} />))],
  [1, <><rect x="8" y="2" width="8" height="5" fill="#fff" /><path d="M9 9h6l-2 5h-2zM8 22v-5l4-3 4 3v5z" fill="#fff" /><path d="M12 1v22" stroke="#d42020" strokeWidth="2.5" /></>],
  [1, <><path d="M4 5l7-2v15l-4 4-4-3z" fill="#fff" /><path d="M13 3l8 3-5 15-7-3z" fill={B} /></>],
  [1, <><rect x="9" y="1" width="4" height="21" fill={B} /><path d="M2 4c0 6 3 9 6 8v8M20 5c-1 6-4 8-6 7l6 9" strokeWidth="2" /></>],
  [1, <path d="M4 14l3-1 3 5L20 3l1 1-11 18z" fill="#111" />],
  [1, <><path d="M2 8l6-5 6 2v12l-5 4-7-3z" fill="url(#steel)" /><path d="M13 20l5-14 4 12-4 4z" fill="url(#steel)" /></>],
  [1, <><path d="M11 9l8 9-8 4-8-4z" fill="url(#gold)" stroke="#6a4a08" /><path d="M10 4l5-3h6v4l-5 3-4-1z" fill="#fff" /></>]
];

const L = ({ children }) => <CategoryLetter>{children}</CategoryLetter>;
const D = "#454545";

const categories = [
  <I><path d="M7 3h10l5 9-5 9H7l-5-9z" fill={D} stroke="none" /></I>,
  <I><path d="M19 7V4H5l7 8-7 8h14v-3" stroke={D} strokeWidth="2.8" /></I>,
  <I strokeWidth="3" stroke={D}><path d="M12 22v-9C11 7 7 4 2 3M12 13c1-6 4-9 10-10" /><path d="M2 3c1 7 5 9 9 9-1-5-3-7-9-9zM22 3c-6 0-9 4-9 9 5 0 8-3 9-9z" fill={D} strokeWidth="1" /></I>,
  <I><path d="M3 21l3-7 4-1 3-4-2-2 10-5-4 11-3-1-4 4-1 3z" fill={D} stroke="none" /></I>,
  <I><path d="M4 8c5-6 10-2 8 3-5 1-8 4-6 8 4 4 13 2 13-9" stroke={D} strokeWidth="2" /></I>,
  <I><path d="M7 3c9 0 14 6 15 12L11 22l-9-7c2-4 4-7 5-12z" fill={D} stroke="none" /></I>,
  <I><path d="M2 5l19-2-5 19-4-4-1-7z" fill={D} stroke="none" /></I>,
  <I><path d="M4 3c8 6 12 12 17 17M20 4C15 8 9 14 3 21" stroke={D} strokeWidth="2" /></I>,
  <I><path d="M21 5C12 0 4 6 6 14c2 8 12 8 12 2 0-4-5-5-7-2M6 12l12-3" stroke={D} strokeWidth="2.5" /></I>,
  <I><path d="M1 12c6-8 16-8 22 0-6 8-16 8-22 0z" fill="#888" stroke={D} /><circle cx="12" cy="12" r="4.5" fill={D} /></I>,
  <I><path d="M2 8l6 2 3 6 3-4 3 3 5-3M8 4v8" stroke={D} strokeWidth="3" /></I>,
  <L>K</L>, <L>P</L>, <L>S</L>,
  <I><path d="M5 8c4-6 12-7 18-5-1 5-2 7-4 9l2 8-5-4-7 5-6 1 1-7z" fill="#2f9c8a" stroke="none" /><path d="M5 10h14M8 17h8" stroke="#e8f4f0" /></I>,
  <L>W</L>, <L>B</L>,
  <I><circle cx="12" cy="12" r="9" stroke="#39505a" strokeWidth="3" strokeDasharray="11 3" /><circle cx="12" cy="12" r="3" stroke="#9ab" /></I>,
  <I><circle cx="12" cy="12" r="8" fill="#2c8fe0" stroke="#bfe0ff" strokeWidth="4" /><circle cx="12" cy="12" r="4.5" fill="#071c38" stroke="none" /></I>,
  <L>J</L>, <L>K</L>,
  <I strokeWidth="3"><path d="M0 5h12M6 5v15" stroke="#2c5f78" /><path d="M12 5h10v14h-9M14 12h8" stroke="#1fb8b0" /></I>,
  <I><path d="M2 4l9 4 12-1-7 6-4 1-4 9-1-9z" fill="#2b62a8" stroke="none" /></I>,
  <I><circle cx="12" cy="12" r="9" fill="#777" stroke="#aaa" /><path d="M7 7h10M12 7v12" stroke="#222" strokeWidth="3" /></I>,
  <L>L</L>,
  <I><path d="M2 15C5 8 15 6 22 14" stroke="#8f5cf0" strokeWidth="3.5" /><path d="M2 15C4 10 8 9 11 9" stroke="#38c8f0" strokeWidth="3" /></I>,
  <I><path d="M5 21V12l5 2V6l6-4v19z" stroke="#c8455c" fill="#f2d4da" /><path d="M4 21h16" stroke="#d22a4a" strokeWidth="3" /><path d="M13 5v12" stroke="#3c4c6c" strokeWidth="2" /></I>,
  <I><path d="M3 6c2-4 12-3 15 3 3 4 2 10-1 12-4-1-6-4-6-8" stroke="#666" /><path d="M2 4l4 4" strokeWidth="3" /><path d="M16 21l4-4" stroke="#34c48a" strokeWidth="3" /></I>,
  <L>L</L>, <L>S</L>,
  <I><circle cx="12" cy="12" r="9" fill="#7a1418" stroke="#2a0a0a" strokeDasharray="3 2" strokeWidth="2" /><path d="M7 8l10 8M17 8L7 16" stroke="#e0262c" /></I>
];

// small tilted cylinder used by the preview buttons
const can = (fill, stroke) => (
  <g stroke={stroke} strokeWidth="1.4">
    <path d="M2 15L11 3c4-3 13 2 11 8l-8 11C9 24 1 20 2 15z" fill={fill} />
    <ellipse cx="16.5" cy="7" rx="6" ry="3.8" transform="rotate(35 16.5 7)" fill={fill} />
    <ellipse cx="16.5" cy="7" rx="3" ry="1.8" transform="rotate(35 16.5 7)" />
  </g>
);

const hexBadge = label => (
  <svg viewBox="0 0 24 24">
    <path d="M7 1.5h10l6 10.5-6 10.5H7L1 12z" fill="#1d1d1d" stroke="#555" />
    <text x="12" y={label === "7" ? 18 : 16} textAnchor="middle" fill="#fff" fontSize={label === "7" ? 16 : 11} fontWeight="700" fontStyle="italic">{label}</text>
  </svg>
);

const arrowDown = <svg viewBox="0 0 12 12"><path d="M6 1v9M2 6l4 4 4-4" fill="none" stroke="#555" strokeWidth="1.6" /></svg>;
const arrowRight = <svg width="13" height="8" viewBox="0 0 13 8"><path d="M0 4h12M9 1.5L12 4 9 6.5" fill="none" stroke="#1c2350" strokeWidth="1.3" /></svg>;
const downloadIcon = (
  <svg viewBox="0 0 24 24">
    <path d="M1 17L8 2l5 15M4 12h8M0 17h5M10 17h5" fill="none" stroke="#333" strokeWidth="2.4" />
    <path d="M14 7h5v9h3l-5.5 7L11 16h3z" fill="#1450c8" stroke="#08277a" />
  </svg>
);
const doorIcon = (
  <svg viewBox="0 0 24 24">
    <path d="M9 1l11 4v18h-8V14H9z" fill="#2c2c2c" stroke="#fff" strokeWidth="1.5" />
    <rect x="2" y="13" width="11" height="10" fill="#1593fb" />
  </svg>
);
const listIcon = (
  <svg viewBox="0 0 24 24">
    <rect x="8" y="1" width="8" height="22" fill="#7ed321" stroke="#3c7a10" />
    <path d="M10 12h8M17 8l6 4-6 4z" stroke="#d40000" strokeWidth="2.4" fill="#d40000" />
    <path d="M1 16V8l5 8V8" stroke="#222" strokeWidth="1.8" fill="none" />
  </svg>
);
const jsonIcon = kind => (
  <svg viewBox="0 0 24 24">
    {kind === "obj" && <><path d="M1 1h22v15l-9 7-11-3z" fill="#1a98a0" /><path d="M1 1l11 5v17l-9-3zM23 16l-11 1v6z" fill="#0b6a74" /><path d="M10 4c-2 3-2 5 0 8M15 4c2 3 2 5 0 8" fill="none" stroke="#fff" strokeWidth="1.5" /></>}
    {kind === "key" && <><path d="M1 3l14 6 8-7v21H13L1 14z" fill="#1a98a0" /><path d="M1 3l14 6-14 5z" fill="#0b6a74" /><path d="M15 14h8v9h-8z" fill="#3fc0c0" /><path d="M18 15v7M21 15l-3 3.5 3 3.5" fill="none" stroke="#fff" strokeWidth="1.4" /></>}
    {kind === "arr" && <><path d="M1 9L17 1l5 20-14 2z" fill="#1a98a0" /><path d="M17 1l5 20-4-3z" fill="#0b6a74" /><path d="M10 9v7M15 9v7" stroke="#fff" strokeWidth="1.6" /></>}
    {kind === "val" && <><path d="M1 12L17 1l5 20-13 2z" fill="#1a98a0" /><path d="M17 1l5 20-5-2z" fill="#0b6a74" /><circle cx="14" cy="12" r="1.6" fill="#fff" /></>}
  </svg>
);
const pathIcon = (
  <svg viewBox="0 0 24 24">
    <rect x="1" y="1" width="22" height="22" fill="#e6e6e6" stroke="#444" />
    <path d="M1 6c8 0 9 14 22 13v4H1z" fill="#f5a81c" stroke="#c81c1c" strokeWidth="2" />
    <path d="M12 11l9-9M13 8l-1-5M15 9l6 2M14 7l3-5M12 10l9-4M17 11l3 3" stroke="#555" strokeWidth="1.2" />
  </svg>
);
const dragonIcon = (
  <svg viewBox="0 0 24 24">
    <path d="M2 2l3 4 1-4 3 6 2-1-1 5 5 3 3-1-4-4 3-8 5-1-3 4 3 5-1 8-8 5-7-1-4-5 1-4z" fill="#1a0506" />
    <path d="M14 4l8-3-3 5 3 5-1 7-4-5-3-3z" fill="#6d1118" />
  </svg>
);
const memberIcon = (
  <svg viewBox="0 0 24 24">
    <rect x="1" y="1" width="22" height="22" rx="1" fill="#a5e65a" stroke="#3f6a18" strokeWidth="2" />
    <path d="M5 18l2-9M6 12c2-4 5-3 4 1l-1 5M11 12c2-4 6-3 5 1l-1 4c0 1 1 1 3 0" fill="none" stroke="#152808" strokeWidth="2.4" />
  </svg>
);

/* ---------- viewport scene ---------- */

// corners of the construction plane, clockwise from the far left one
const plane = [[495, 402], [1122, 509], [979, 1039], [166, 878]];

const project = ([[x0, y0], [x1, y1], [x2, y2], [x3, y3]]) => {
  const dx1 = x1 - x2, dx2 = x3 - x2, sx = x0 - x1 + x2 - x3;
  const dy1 = y1 - y2, dy2 = y3 - y2, sy = y0 - y1 + y2 - y3;
  const det = dx1 * dy2 - dx2 * dy1;
  const g = (sx * dy2 - dx2 * sy) / det;
  const h = (dx1 * sy - sx * dy1) / det;
  const a = x1 - x0 + g * x1, b = x3 - x0 + h * x3;
  const d = y1 - y0 + g * y1, e = y3 - y0 + h * y3;
  return (u, v) => {
    const w = g * u + h * v + 1;
    return [(a * u + b * v + x0) / w, (d * u + e * v + y0) / w];
  };
};

const at = project(plane);
const seg = (p, q) => `M${p[0].toFixed(1)} ${p[1].toFixed(1)}L${q[0].toFixed(1)} ${q[1].toFixed(1)}`;
const steps = Array.from({ length: 41 }, (_, i) => i / 40);
const planeLines = steps.map(t => seg(at(t, 0), at(t, 1)) + seg(at(0, t), at(1, t))).join("");

const facades = [
  { quad: [[205, 978], [368, 1142], [400, 1398], [242, 1225]], wall: "#a9a6a0", glass: "#3c3c36", trim: "#d8d6d0",
    cols: [[0.1, 0.22], [0.31, 0.39], [0.54, 0.7], [0.8, 0.93]] },
  { quad: [[368, 1142], [700, 972], [728, 1225], [400, 1398]], wall: "#e7e4e1", glass: "#5d5c52", trim: "#cfccc8",
    cols: [[0.07, 0.2], [0.26, 0.34], [0.44, 0.51], [0.61, 0.68], [0.73, 0.85], [0.93, 0.99]] },
  { quad: [[700, 972], [943, 1205], [958, 1458], [728, 1225]], wall: "#a5a39e", glass: "#45433b", trim: "#c4c2bc",
    cols: [[0.05, 0.16], [0.26, 0.33], [0.4, 0.52], [0.59, 0.66], [0.74, 0.88], [0.92, 0.98]] }
];
const floors = [[0.07, 0.33], [0.39, 0.64], [0.71, 0.95]];

const inQuad = (q, u, v) => [0, 1].map(k =>
  (1 - v) * ((1 - u) * q[0][k] + u * q[1][k]) + v * ((1 - u) * q[3][k] + u * q[2][k]));

const Facade = ({ quad, wall, glass, trim, cols }) => (
  <g>
    <polygon points={quad.join(" ")} fill={wall} stroke={trim} strokeWidth="3" />
    {cols.map(([a, b]) => floors.map(([c, d]) => {
      const pts = [[a, c], [b, c], [b, d], [a, d]].map(([u, v]) => inQuad(quad, u, v));
      const m = (a + b) / 2, n = (c + d) / 2;
      return (
        <g key={a + "-" + c}>
          <polygon points={pts.join(" ")} fill={glass} stroke={trim} strokeWidth="3" />
          <path d={seg(inQuad(quad, m, c), inQuad(quad, m, d)) + seg(inQuad(quad, a, n), inQuad(quad, b, n))} stroke="#23262a" strokeWidth="2" />
          <path d={seg(inQuad(quad, a, n - 0.02), inQuad(quad, b, n - 0.02))} stroke="#7c3a3c" strokeWidth="2" />
        </g>
      );
    }))}
  </g>
);

const faces = [
  ["#dadd84", "92,305 692,62 702,165 672,165 260,350 180,395"],
  ["#6ba1c9", "692,58 768,112 768,125 702,148"],
  ["#c6be6a", "800,105 1170,385 1086,430 1082,327 1050,300 808,240"],
  ["#ff7777", "180,392 260,350 672,165 768,122 785,270 808,230 906,190 908,235 948,222 950,265 987,253 993,325 1027,312 1055,336 1082,327 1086,430 890,525 630,303 260,468"],
  ["#c6be6a", "993,325 1027,312 1055,336 1082,327 1050,300 987,253"],
  ["#de4242", "219,265 290,328 262,345 264,352 233,367"],
  ["#de4242", "279,238 351,300 290,328"],
  ["#de4242", "340,213 408,272 353,298"],
  ["#de4242", "399,188 466,245 408,272"],
  ["#de4242", "457,163 530,225 468,243"],
  ["#de4242", "546,127 620,187 556,214"],
  ["#de4242", "312,350 370,415 320,438"],
  ["#de4242", "373,325 440,382 382,410"],
  ["#de4242", "434,298 499,352 442,380"],
  ["#de4242", "493,272 558,327 500,352"],
  ["#de4242", "265,358 277,365 288,450 278,454"],
  ["#de4242", "676,165 694,178 702,277 688,283"],
  ["#de4242", "726,268 753,292 755,322 733,335"],
  ["#de4242", "785,243 988,407 962,415 962,485 936,495 930,398 893,413 889,365 854,378 850,335 817,345 812,295 787,305"],
  ["#de4242", "975,415 1027,460 977,482"],
  ["#de4242", "1025,312 1055,336 1028,350"],
  ["#98dadb", "768,108 800,98 808,240 785,250 783,280"],
  ["#dfd55c", "95,315 178,393 280,1048 205,978"],
  ["#eca750", "178,393 260,470 368,1142 278,1050"],
  ["#f3bb5d", "260,470 630,310 700,972 368,1142"],
  ["#ffca6c", "260,470 330,442 420,1118 368,1142"],
  ["#f6bd60", "283,462 290,459 386,1132 380,1135"],
  ["#fec96c", "568,337 630,310 700,972 645,1000"],
  ["#eaac55", "630,310 890,525 943,1205 700,972"],
  ["#cfd17a", "950,1335 995,1312 1058,1395 958,1455"],
  ["#fec96c", "890,525 940,500 995,1315 952,1335 943,1205"],
  ["#f1b95b", "938,501 968,488 990,770 1003,785 1045,1365 995,1315"],
  ["#f0b65b", "1000,700 1053,700 1078,682 1100,664 1187,742 1110,785 1028,825 1035,1000 1058,1395 1044,1385 1003,785"],
  ["#ffca6c", "963,490 980,483 997,765 1053,808 1028,822 1020,800 1058,1395 1044,1385 1003,785 987,768"],
  ["#eeb15b", "978,483 1032,458 1053,805 997,765"],
  ["#fec96c", "1030,458 1086,432 1100,670 1080,680 1080,740 1105,735 1107,785 1053,808"],
  ["#e8e570", "1086,432 1171,392 1185,742 1140,720 1100,670"],
  ["#f1f065", "1100,625 1165,597 1182,600 1183,705 1140,720 1078,682 1100,668"],
  ["#f0bc5d", "1107,698 1185,742 1107,782"],
  ["#c3ba67", "1183,603 1470,835 1387,880 1185,700"],
  ["#ff7777", "1028,822 1187,742 1187,698 1256,665 1258,745 1319,720 1322,800 1384,770 1387,885 1207,982"],
  ["#de4242", "1108,785 1170,750 1290,850 1265,862 1266,950 1207,977 1197,965 1195,808 1110,850"],
  ["#de4242", "1278,860 1335,910 1282,937"],
  ["#eba550", "1027,825 1207,985 1222,1380 1110,1445 1100,1325 1080,1365 1058,1370"],
  ["#edb05a", "1027,828 1075,872 1100,1325 1078,1368 1055,1380"],
  ["#c8be6a", "1100,1320 1110,1445 1222,1380 1230,1565 1058,1400 1082,1362 1082,1330"],
  ["#dadb7c", "1222,1380 1355,1487 1230,1565"],
  ["#d8d67b", "1355,1362 1393,1340 1475,1415 1355,1487"],
  ["#f0b75a", "1207,985 1265,955 1282,1435 1222,1380"],
  ["#ffc76b", "1263,957 1280,948 1296,1433 1282,1437"],
  ["#efb35a", "1280,948 1342,918 1355,1487 1295,1433"],
  ["#ffc66b", "1340,918 1386,890 1393,1340 1354,1362"],
  ["#e8e568", "1386,890 1473,845 1475,1415 1393,1340"]
];

const RhinoScene = () => (
  <Scene>
    <polygon points={plane.join(" ")} fill="#92959e" />
    <path d={planeLines} stroke="#7f828b" strokeWidth="1" fill="none" />
    <path d={seg(at(0, 0.5), at(0.5, 0.5))} stroke="#a04a50" strokeWidth="1.5" />
    <path d="M667 737L558 956" stroke="#3f9a42" strokeWidth="2" />
    <g transform="translate(264 180) scale(0.4209 0.3827)">
      {faces.map(([fill, points]) => <polygon key={points} points={points} fill={fill} />)}
      <path d="M958 1450L1005 1322" stroke="#a5e04c" strokeWidth="4" />
      <path d="M685 365L755 1000M722 390L790 1070M762 425L825 1105M802 458L862 1130" stroke="#eda05a" strokeWidth="2" />
      <g fill="none" strokeWidth="9">
        <path d="M95 306L692 56M768 110L800 99" stroke="#cfb4d6" />
        <path d="M692 56L770 110M800 99L1170 387M1183 602L1470 834M95 306L180 390" stroke="#a294bd" strokeWidth="7" />
        <path d="M180 390L260 468M630 305L890 523M1027 824L1207 982" stroke="#c57fb4" />
        <path d="M260 466L630 305M890 523L1086 432M1207 982L1386 890" stroke="#f39ac4" />
        <path d="M1086 432L1170 390M1386 890L1472 838" stroke="#dfc6cf" />
      </g>
      {facades.map(f => <Facade key={f.wall} {...f} />)}
      <path d="M368 1145L404 1398" stroke="#f2d9a8" strokeWidth="5" />
      <path d="M242 1230L398 1402M404 1402L728 1230L960 1462" stroke="#a81418" strokeWidth="7" strokeDasharray="9 15" fill="none" />
      <path d="M394 1402h20M952 1462l18 4M956 1470l12-14" stroke="#a81418" strokeWidth="11" />
    </g>
    <path d="M35 1080V1056M35 1080L7 1077M35 1080l-7 18" stroke="#54575d" strokeWidth="1.3" />
    <g fill="#54575d" fontSize="11">
      <text x="37" y="1058">z</text>
      <text x="9" y="1076">x</text>
      <text x="30" y="1098">y</text>
    </g>
  </Scene>
);

/* ---------- canvas ---------- */

const wire = (x1, y1, x2, y2, k) => {
  const h = k || Math.max((x2 - x1) / 2, 4);
  return `M${x1} ${y1}C${x1 + h} ${y1} ${x2 - h} ${y2} ${x2} ${y2}`;
};

const itemWires = [[133, 359, 224, 359], [293, 349, 412, 349], [203, 693, 258, 693], [327, 682, 375, 682],
  [445, 682, 460, 682], [431, 779, 460, 701, 45], [536, 692, 541, 692], [616, 692, 623, 692]];
const listWires = [[720, 179, 733, 179], [936, 505, 960, 471], [936, 505, 960, 582, 48], [938, 453, 960, 452],
  [940, 563, 960, 563], [766, 698, 831, 525, 112], [696, 693, 712, 698]];
const treeWires = [[588, 192, 651, 179], [588, 231, 651, 179], [588, 231, 654, 232], [588, 251, 654, 252],
  [588, 505, 721, 507], [777, 507, 831, 505], [720, 160, 733, 160], [819, 179, 834, 180]];

const Wires = () => (
  <CanvasSvg fill="none">
    {itemWires.map(w => <path key={w} d={wire(...w)} stroke="#464646" strokeWidth="3" />)}
    {listWires.map(w => (
      <g key={w}>
        <path d={wire(...w)} stroke="#555255" strokeWidth="5" />
        <path d={wire(...w)} stroke="#949094" strokeWidth="2" />
      </g>
    ))}
    {treeWires.map(w => (
      <g key={w}>
        <path d={wire(...w)} stroke="#4c4c4c" strokeWidth="5" strokeDasharray="12 5" />
        <path d={wire(...w)} stroke="#a8a4a8" strokeWidth="2" strokeDasharray="10 7" strokeDashoffset="-1" />
      </g>
    ))}
    <g stroke="#b6b3ac" strokeWidth="1.5">
      <path d="M1029 471c80 0 150 4 216 7M1029 582c80 1 150 6 216 10" />
      <path d="M1029 471c60 2 100 26 122 55 34 44 54 114 94 163" />
    </g>
    <g stroke="#b3abb3">
      <path d="M861 447q-4 6 0 12M857 445q-5 8 0 16M829 557q-4 6 0 12M825 555q-5 8 0 16" />
    </g>
  </CanvasSvg>
);

const CanvasGrid = () => (
  <CanvasSvg>
    <defs>
      <pattern id="cell" x="123" y="19" width="146.5" height="48.86" patternUnits="userSpaceOnUse">
        <path d="M0 .5H147M.5 0V49" stroke="#bfbbb3" strokeWidth="1.5" />
      </pattern>
    </defs>
    <rect width="100%" height="100%" fill="url(#cell)" />
  </CanvasSvg>
);

const Node = ({ x, y, w, h, tone = "steel", ins = [], outs = [], icon, iconSize, inPad = 6, outPad = 9 }) => (
  <NodeBox $x={x} $y={y} $w={w} $h={h} $tone={tone}>
    {ins.length > 0 && (
      <Ports>
        {ins.map((p, i) => <Port key={i} $side="in" $pad={inPad}>{p}</Port>)}
      </Ports>
    )}
    <Middle $size={iconSize}>{icon}</Middle>
    {outs.length > 0 && (
      <Ports>
        {outs.map((p, i) => <Port key={i} $side="out" $pad={outPad}>{p}</Port>)}
      </Ports>
    )}
  </NodeBox>
);

const Relay = ({ x, y, w, name, incoming }) => (
  <NodeBox $x={x} $y={y} $w={w} $h={21} $tone="blue">
    <Ports>
      <Port $side="in" $pad={4}>{incoming ? arrowRight : <Modifier>{arrowDown}</Modifier>}</Port>
    </Ports>
    <Middle>{name}</Middle>
    <Ports>
      <Port $side="out" $pad={incoming ? 0 : 4}>{!incoming && arrowRight}</Port>
    </Ports>
  </NodeBox>
);

const modelOutputs = ["Errors", "Heights", "Slabs", "Walls", "WallTypes", "Openings", "OpeningTypes",
  "OpeningNames", "OpeningHeights", "UnitContours", "UnitTypes", "UnitWalls", "UnitOpenings",
  "UnitOpeningTypes", "UnitOpeningNames", "UnitOpeningHeights", "SlabIds", "WallIds", "UnitWallIds"];

const ModelPorts = styled(Ports)`
  width: 110px;
`;

const Definition = () => (
  <Canvas>
    <CanvasGrid />
    <CanvasGroup />
    <Halo />
    <Wires />
    <Scribble $x={506} $y={115} $w={154}>retrieveSkemaANalyticalModel</Scribble>
    <Scribble $x={138} $y={633} $w={75}>Multiple walls</Scribble>

    <Node x={79} y={347} w={50} h={24} ins={[""]} outs={[""]} inPad={0} outPad={0} icon={hexBadge("C/")} />
    <Node x={227} y={337} w={64} h={44} tone="orange" ins={["U"]} outs={["T", "F"]} icon={downloadIcon} />
    <Balloon $x={273} $y={322} />
    <NodeBox $x={416} $y={162} $w={170} $h={375} $tone="tall">
      <Ports><Port $side="in" $pad={6}>REM</Port></Ports>
      <Middle>{doorIcon}</Middle>
      <ModelPorts>
        {modelOutputs.map(name => <Port key={name} $side="out">{name}</Port>)}
      </ModelPorts>
    </NodeBox>

    <Node x={654} y={147} w={64} h={63} tone="light" ins={["T"]} outs={["P", "L", "C"]} icon={pathIcon} />
    <Node x={735} y={147} w={82} h={63} tone="light" iconSize={20} inPad={2}
      ins={["D", <><Modifier $up>{arrowDown}</Modifier>N</>, "O"]} outs={["D"]} icon={dragonIcon} />
    <Relay x={836} y={170} w={116} name="allWallHeights" />
    <Relay x={656} y={221} w={81} name="allWalls" />
    <Relay x={656} y={242} w={106} name="allWallTypes" />

    <Node x={724} y={495} w={51} h={24} ins={[""]} outs={[""]} inPad={0} outPad={0} icon={hexBadge("7")} />
    <Node x={834} y={493} w={100} h={44} iconSize={18} inPad={2} outPad={2}
      ins={[<><Modifier>{arrowDown}</Modifier>S</>, "M"]} outs={[<>I<Modifier>{arrowDown}</Modifier></>, "N"]} icon={memberIcon} />
    <Relay x={868} y={443} w={68} name="allWalls" incoming />
    <Relay x={836} y={553} w={102} name="allWallHeights" incoming />
    <Node x={962} y={440} w={64} h={63} tone="light" ins={["L", "i", "W"]} outs={["i"]} icon={listIcon} iconSize={20} />
    <Node x={962} y={551} w={64} h={63} tone="light" ins={["L", "i", "W"]} outs={["i"]} icon={listIcon} iconSize={20} />

    <Node x={152} y={681} w={49} h={24} ins={[""]} outs={[""]} inPad={0} outPad={0} icon={hexBadge("C/")} />
    <Node x={261} y={671} w={64} h={44} tone="orange" ins={["U"]} outs={["T", "F"]} icon={downloadIcon} />
    <Balloon $x={307} $y={656} />
    <Node x={377} y={670} w={66} h={27} ins={["T"]} outs={["JT"]} icon={jsonIcon("obj")} iconSize={20} />
    <Node x={462} y={671} w={72} h={44} ins={["JO", "K"]} outs={["JT"]} icon={jsonIcon("key")} inPad={4} />
    <Node x={543} y={678} w={71} h={28} ins={["JA"]} outs={["JT"]} icon={jsonIcon("arr")} iconSize={22} inPad={4} />
    <Node x={625} y={662} w={69} h={63} ins={["JV"]} outs={["S", "N", "B"]} icon={jsonIcon("val")} inPad={4} />
    <Node x={714} y={686} w={50} h={24} ins={[""]} outs={[""]} inPad={0} outPad={0} icon={hexBadge("7")} />
    <NodeBox $x={324} $y={763} $w={105} $h={32} $tone="yellow">
      <Ports><Port $side="in" /></Ports>
      <PanelText>walls</PanelText>
      <Ports><Port $side="out" /></Ports>
    </NodeBox>

    <Pointer viewBox="0 0 26 36">
      <path d="M3 3v27l6-6 5 11 5-2-5-11h9z" fill="#fff" stroke="#4d4d55" strokeWidth="1.6" />
    </Pointer>
    <Tray>
      <svg viewBox="0 0 24 24"><path d="M6 1.5h12L23 12l-5 10.5H6L1 12z" fill="#181818" /><text x="12" y="16" textAnchor="middle" fontSize="10" fontWeight="700" fontStyle="italic" fill="#eee">C/</text></svg>
      <svg viewBox="0 0 24 24"><rect x="1" y="1" width="22" height="22" rx="2" fill="#ffc81c" stroke="#a87a08" /><path d="M5 20c0-6 1-6 2-3s2 1 3-5 2 0 2 3 2 0 3-8 2 2 3 4 2-3 2-5" fill="none" stroke="#8a5208" strokeWidth="2" /></svg>
      <svg viewBox="0 0 24 24"><path d="M6 19c9 0 4-14 11-14" fill="none" stroke="#8a2020" strokeWidth="2" /><circle cx="5" cy="20" r="2.5" fill="#fff" stroke="#222" /><circle cx="18" cy="4" r="2.5" fill="#fff" stroke="#222" /></svg>
    </Tray>
    <Compass viewBox="0 0 46 48">
      <circle cx="24" cy="25" r="20" fill="#f4f4f4" stroke="#111" strokeWidth="3" />
      <circle cx="24" cy="25" r="16" fill="url(#knob)" stroke="#999" />
      <path d="M12 13l4 4M36 13l-4 4M12 37l4-4M36 37l-4-4" stroke="#fff" strokeWidth="3" />
      <path d="M3 3l9 2-6 6z" fill="#111" />
    </Compass>
  </Canvas>
);

/* ---------- taskbar icons ---------- */

const chrome = (coat, hair) => (
  <svg viewBox="0 0 24 24">
    <path d="M12 12L3 6a11 11 0 0119 1z" fill="#e33b2e" />
    <path d="M12 12L3 6a11 11 0 007 17z" fill="#2da24e" />
    <path d="M12 12L22 7a11 11 0 01-12 16z" fill="#fbc116" />
    <circle cx="12" cy="12.5" r="5.5" fill="#fff" /><circle cx="12" cy="12.5" r="4.3" fill="#3b7ded" />
    <circle cx="18" cy="6" r="5.8" fill={coat} /><circle cx="18" cy="4" r="3" fill={hair} /><circle cx="18" cy="5.5" r="2.2" fill="#c9a184" />
  </svg>
);
const camtasia = color => (
  <svg viewBox="0 0 24 24"><rect x="1" y="0" width="22" height="24" rx="2" fill={color} /><path d="M18 6H9a2 2 0 00-2 2v8a2 2 0 002 2h9" fill="none" stroke="#fff" strokeWidth="3.2" /></svg>
);

const apps = [
  [<svg viewBox="0 0 24 24"><path d="M6 1h8c2 0 3 1 3 3l1 3h-3c-2 0-3 2-4 6l-2 6c-1 3-2 4-4 4-3-1-5-4-4-8l2-9c1-3 0-5 1-5z" fill="url(#copilotLeft)" /><path d="M12 1h3c2 0 3 1 3 3l1 3h-6z" fill="#1c50c8" /><path d="M18 23h-8c-2 0-3-1-3-3h3c2 0 3-3 4-7l2-6h3c3 0 4 2 4 5l-2 8c-1 2-2 3-4 3z" fill="url(#copilotRight)" /></svg>, 0],
  [<svg viewBox="0 0 24 24"><path d="M0 3h9l2 3h12v16H0z" fill="#f6c544" /><path d="M0 3h9v4H0z" fill="#d59a10" /><path d="M4 22v-5l2-2h12l2 2v5z" fill="#1673c8" /></svg>, 1],
  [<svg viewBox="0 0 24 24"><circle cx="12" cy="12" r="11.5" fill="url(#edge)" /><path d="M12 .5c7 0 12 5 11 11-1 3-4 4-8 3 2-4-1-7-5-7-4 0-7 2-9 5C1 6 6 .5 12 .5z" fill="#3fc8b0" /><path d="M10 13c0 4 4 7 9 5-3 1-6 0-5-3l9 0c-1 2 0 1-1 3-2 1-4 2-7 2-4-1-6-4-5-7z" fill="#d8eef8" /></svg>, 0],
  [chrome("#6b6b55", "#8a8a80"), 1],
  [chrome("#d8d4cf", "#4a342a"), 1],
  [<svg viewBox="0 0 24 24"><path d="M3 0h14l4 4v20H3z" fill="#1c62d8" /><path d="M3 16h18v8H3z" fill="#143c7c" /><text x="12" y="14" textAnchor="middle" fontSize="13" fontWeight="700" fill="#fff">R</text></svg>, 1],
  [<svg viewBox="0 0 24 24"><path d="M1 0h22v24H1z" fill="#2c3fb8" /><path d="M5 0h14v9H5z" fill="#e4e8f8" /><path d="M13 2h3v6h-3z" fill="#2c3fb8" /><path d="M4 12h16v12H4z" fill="#f4d8d8" /><path d="M5 15h14M5 18h14M5 21h14" stroke="#c88" /></svg>, 1],
  [camtasia("#4aa00c"), 1],
  [<svg viewBox="0 0 24 24"><path d="M0 0h24v24H0z" fill="#111" /><path d="M1 12l5-1 3 3 8-8 4 6-7 11-5-4zM6 2l5 8-3 1zM10 1l3 5-2 2z" fill="#f4f4f4" /><circle cx="19" cy="4" r="2" fill="none" stroke="#fff" /></svg>, 1],
  [camtasia("#ee5340"), 1, 1]
];

/* ---------- app ---------- */

const rhinoMenu = ["File", "Edit", "View", "Curve", "Surface", "SubD", "Solid", "Mesh", "Drafting", "Transform", "Tools", "Analyze", "Render", "Window", "Help"];
const toolTabs = ["Standard", "CPlanes", "Set View", "Display", "Select", "Viewport Layout", "Visibility", "Transform", "Curve Tools", "Surface Tools", "Solid Tools", "SubD Tools", "Mesh Tools", "Render Tools", "Drafting", "New in V8"];
const snaps = ["End", "Near", "Point", "Mid", "Cen", "Int", "Perp", "Tan", "Quad", "Knot", "Vertex", "Project", "Disable"];
const snapsOn = ["End", "Mid", "Int", "Perp"];
const hopperMenu = ["File", "Edit", "View", "Display", "Solution", "Help", "SnappingGecko", "Cyclops", "ShapeDiver"];
const history = `Command: Grasshopper
AccountBaseAddress: https://account.skema.site/
ApiBaseAddress: https://app.skema.site/
Command: PackageManager
Successfully logged in Skema as Skema_SD@skema.site`;

const RhinoWindow = () => (
  <Rhino>
    <RhinoTitle>
      <svg width="17" height="18" viewBox="0 0 17 18"><path d="M0 0h17v18H0z" fill="#1a1a1a" /><path d="M1 9l4-1 2 2 5-6 4 5-5 8-4-3zM4 1l3 6-2 1zM7 1l2 4-2 1z" fill="#fff" /></svg>
      Rhino 8 Commercial - [Perspective]
    </RhinoTitle>
    <MenuBar>{rhinoMenu.map(m => <button key={m}>{m}</button>)}</MenuBar>
    <Console>
      <Grip><i /><i /><i /><i /></Grip>
      <ConsoleBody>
        <History>{history}</History>
        <Prompt>Command:<input /></Prompt>
      </ConsoleBody>
    </Console>
    <TabStrip>{toolTabs.map((t, i) => <TabButton key={t} $on={i === 0}>{t}</TabButton>)}</TabStrip>
    <ToolStrip>
      <ToolRow $width={903}>
        {standardTools.map(([more, art], i) => (
          <ToolButton key={i} $more={more} $size={22}><I>{art}</I></ToolButton>
        ))}
      </ToolRow>
    </ToolStrip>
    <RhinoMain>
      <Side>
        <Palette>
          <PaletteGrip>▫▫▫▫</PaletteGrip>
          <PaletteGrid>
            {paletteTools.map(([more, art], i) => (
              <ToolButton key={i} $more={more} $size={21}><I>{art}</I></ToolButton>
            ))}
          </PaletteGrid>
        </Palette>
        <PanelTitle>
          Osnap
          <svg width="12" height="12" viewBox="0 0 12 12" fill="none" stroke="#9a9ba0" strokeWidth="1.5"><circle cx="6" cy="6" r="3.2" /><path d="M6 0v2M6 10v2M0 6h2M10 6h2M2 2l1 1M9 9l1 1M10 2L9 3M3 9l-1 1" /></svg>
        </PanelTitle>
        <PanelTabs>
          <PanelTab $on><I stroke="#777"><circle cx="11" cy="12" r="8" /><circle cx="11" cy="12" r="2.5" fill="#555" /><path d="M11 12h11" /></I></PanelTab>
          <PanelTab><I><path d="M4 6h15l-6 7v8l-3-2v-6z" fill="#666" /><path d="M19 3h3v3M2 19v3h3" /></I></PanelTab>
        </PanelTabs>
        <Snaps>
          <SnapList>
            {snaps.map(s => (
              <Snap key={s}><input type="checkbox" defaultChecked={snapsOn.includes(s)} />{s}</Snap>
            ))}
          </SnapList>
        </Snaps>
      </Side>
      <ViewColumn>
        <Viewport>
          <RhinoScene />
          <ViewLabel>Perspective<span>▼</span></ViewLabel>
        </Viewport>
        <ViewTabs>
          {["Perspective", "Top", "Front", "Right"].map(v => <button key={v}>{v}</button>)}
          <button aria-label="Add view">
            <svg width="10" height="10" viewBox="0 0 10 10"><path d="M3.5 1h3v2.5H9v3H6.5V9h-3V6.5H1v-3h2.5z" fill="#fff" stroke="#66676c" /></svg>
          </button>
        </ViewTabs>
      </ViewColumn>
    </RhinoMain>
    <StatusBar>
      <StatusCell $w={40}>
        <svg width="28" height="14" viewBox="0 0 28 14"><path d="M7 1h12v12H7z" fill="none" stroke="#444" strokeWidth="1.5" /><path d="M8 2h4v10H8z" fill="#444" /></svg>
      </StatusCell>
      <StatusCell $w={73}>CPlane</StatusCell>
      <StatusCell $w={89}>x -218.21</StatusCell>
      <StatusCell $w={94}>y 78.39</StatusCell>
      <StatusCell $w={79}>z 0</StatusCell>
      <StatusCell $w={71}>Meters</StatusCell>
      <LayerCell><i />Default</LayerCell>
      <Modes>
        <Mode $w={56}>Grid Snap</Mode>
        <Mode $w={50}>Ortho</Mode>
        <Mode $w={50} $on>Planar</Mode>
        <Mode $w={50} $on>Osnap</Mode>
        <Mode $w={76}>SmartTrack</Mode>
        <Mode $w={114}>Gumball (CPlane)</Mode>
        <svg width="10" height="14" viewBox="0 0 10 14" fill="none" stroke="#a0a1a6"><path d="M3 6V4a2 2 0 014 0v2" /><rect x="1" y="6" width="8" height="7" /></svg>
        <Mode $w={124}>Auto CPlane (World)</Mode>
        <Mode $w={58}>Record</Mode>
      </Modes>
    </StatusBar>
  </Rhino>
);

const HopperWindow = () => (
  <Hopper>
    <HopperTitle>
      Grasshopper - SKM_SD_Plugin_V2_SD_Comp*
      <WindowButtons>
        <button aria-label="Minimize"><svg width="10" height="10" stroke="#777"><path d="M0 5.5h10" /></svg></button>
        <button aria-label="Maximize"><svg width="10" height="10" fill="none" stroke="#777"><rect x=".5" y=".5" width="9" height="9" /></svg></button>
        <button aria-label="Close"><svg width="10" height="10" stroke="#777"><path d="M0 0l10 10M10 0L0 10" /></svg></button>
      </WindowButtons>
    </HopperTitle>
    <HopperMenu>
      {hopperMenu.map(m => <button key={m}>{m}</button>)}
      <span>SKM_SD_Plugin_V2_SD_Comp*</span>
    </HopperMenu>
    <Categories>
      <ToolRow $width={846}>
        {categories.map((c, i) => <Category key={i} $size={16} $on={i === 29}>{c}</Category>)}
      </ToolRow>
    </Categories>
    <Ribbon>
      <RibbonGroup>
        <div>
          <ToolButton $size={23}><I><path d="M3 2h18M3 22h18" strokeWidth="2" /><path d="M4 6c-2 4-2 8 0 12M20 6c2 4 2 8 0 12" stroke="#1593fb" strokeWidth="2" /><path d="M11 6l6 2v11H8v-7h3z" fill="#333" /></I></ToolButton>
          <ToolButton $size={23}><I><path d="M2 1h20v22H2z" fill="#f4f4f4" strokeWidth="2" /><path d="M12 6h8M12 10h8M5 15h15M5 19h15" strokeWidth="2" /><circle cx="8" cy="6" r="2" fill="#1593fb" stroke="none" /><path d="M5 12V9h6v3z" fill="#1593fb" stroke="none" /></I></ToolButton>
          <ToolButton $size={23}>{doorIcon}</ToolButton>
        </div>
        <span>Analytical...</span>
      </RibbonGroup>
    </Ribbon>
    <CanvasBar>
      <BarButton aria-label="Open"><I><path d="M7 2h10l4 4v8H7z" fill="#f4f4f4" /><path d="M2 22V11l4-1 2-2h13v14z" fill="url(#leaf)" stroke="#2c6a12" /></I></BarButton>
      <BarButton $w={32} aria-label="Save"><I><path d="M1 1h22v22H3l-2-2z" fill="#2463d8" stroke="#0d2a74" /><path d="M6 1h12v10H6z" fill="#e9edf5" /><path d="M6 15h12v8H6z" fill="#555" /><path d="M9 17h3v5H9z" fill="#eee" /></I></BarButton>
      <Divider $gap={3} />
      <Zoom>
        <select aria-label="Zoom" defaultValue="100%"><option>100%</option><option>200%</option></select>
        <svg viewBox="0 0 10 10" fill="none" stroke="#888" strokeWidth="1.2"><path d="M1 3l4 4 4-4" /></svg>
      </Zoom>
      <BarButton $w={32} aria-label="Zoom extents"><I><path d="M3 9V3h7M14 3h7v6M21 15v6h-7M10 21H3v-6" stroke="#222" strokeWidth="4" /><path d="M9 9l6 6M15 9l-6 6" strokeWidth="2" /></I></BarButton>
      <Caret />
      <BarButton aria-label="Preview"><I><path d="M1 12c6-9 16-9 22 0-6 8-16 8-22 0z" fill="#d4ecfa" stroke="#333" /><circle cx="12" cy="12" r="5.5" fill="#4fa8dc" /><circle cx="12" cy="12" r="2.5" fill="#0d2438" /></I></BarButton>
      <Caret />
      <BarButton aria-label="Sketch"><I><path d="M3 13c5-2 5 2 2 5-2 3 3 5 8 0" stroke="#444" strokeWidth="2" /><path d="M12 20c-2-5 0-10 10-18 1 6-1 13-6 16z" fill="#e8362c" stroke="none" /><path d="M12 21l1-8 5 3z" fill="#f5c04a" stroke="none" /></I></BarButton>
      <BarButton $push aria-label="No preview"><I><path d="M6 12l3-8c2-3 7-2 9 1l1 9z" fill="#ececec" stroke="#888" /><ellipse cx="12" cy="17" rx="9" ry="5.5" fill="#333" /></I></BarButton>
      <BarButton $w={28} aria-label="Wireframe"><I>{can("#f4f4f4", "#666")}<ellipse cx="8" cy="16" rx="3" ry="5" stroke="#666" transform="rotate(35 8 16)" /></I></BarButton>
      <BarButton $w={29} $on aria-label="Shaded"><I>{can("#c8150c", "#5a0806")}</I></BarButton>
      <Divider $gap={7} />
      <BarButton aria-label="Preview selected"><I><path d="M3 2c2 2 3 4 3 7-1 5 0 10 4 13" strokeWidth="2" /><path d="M7 6c4-5 13-5 15 0 1 4-3 6-4 10-2 6-9 7-10 1-1-3 0-8-1-11z" fill="#12a0a0" stroke="#0a4a4a" /></I></BarButton>
      <BarButton aria-label="Document preview"><I>{can("#64b418", "#2c4a10")}<path d="M1 14l6-4 10 11c-9 4-16 0-16-7z" fill="#e4e4e4" stroke="#888" /><path d="M4 5l16 17" strokeWidth="1.5" /></I></BarButton>
      <BarButton aria-label="Preview settings"><I><circle cx="12" cy="12" r="9.5" fill="#e4e4e4" stroke="#6a3a0c" /><path d="M12 2.5a9.5 9.5 0 000 19z" fill="#f08a1c" stroke="#6a3a0c" /></I></BarButton>
      <Divider $gap={3} />
      <BarButton aria-label="Mesh quality"><I><path d="M8 2h8l5 5v9l-5 6H8l-5-6V7z" fill="url(#ballSky)" stroke="#2c5aa0" /></I></BarButton>
      <Caret />
    </CanvasBar>
    <Definition />
    <HopperStatus>
      <svg viewBox="0 0 16 16"><circle cx="8" cy="8" r="7.5" fill="#1a4fb4" stroke="#0c2458" /><path d="M5 4v8M11 4v8M8 3v7M8 12v1" stroke="#7fd0f4" strokeWidth="1.6" /></svg>
      <span>Autosave complete (120 seconds ago)</span>
      <span>1.0.0008</span>
    </HopperStatus>
  </Hopper>
);

const TaskbarView = () => (
  <Taskbar>
    <span />
    <Apps>
      <AppButton $w={46} aria-label="Start">
        <svg viewBox="0 0 24 24"><path d="M1 1h10.5v10.5H1zM12.5 1H23v10.5H12.5zM1 12.5h10.5V23H1zM12.5 12.5H23V23H12.5z" fill="url(#windows)" /></svg>
      </AppButton>
      <Search>
        <I strokeWidth="3"><circle cx="10" cy="10" r="7.5" /><path d="M15.5 15.5L22 22" /></I>
        <input placeholder="Search" aria-label="Search" />
      </Search>
      {apps.map(([icon, open, on], i) => <AppButton key={i} $open={open} $on={on}>{icon}</AppButton>)}
    </Apps>
    <TrayIcons>
      <svg viewBox="0 0 16 16" fill="none" stroke="#333" strokeWidth="1.5"><path d="M4 10l4-4 4 4" /></svg>
      <svg viewBox="0 0 16 16" fill="none" stroke="#444" strokeWidth="1.2"><rect x="5.5" y="1" width="5" height="9" rx="2.5" /><path d="M3.5 7v1a4.5 4.5 0 009 0V7M8 12.5V15" /></svg>
      <span>ENG</span>
      <Pair>
        <svg viewBox="0 0 16 16" fill="none" stroke="#444" strokeWidth="1.2"><path d="M1 6c4-4 10-4 14 0M3 8.5c3-3 7-3 10 0M5 11c2-2 4-2 6 0" /><circle cx="8" cy="13" r="1" fill="#444" /></svg>
        <svg viewBox="0 0 16 16" fill="none" stroke="#444" strokeWidth="1.2"><path d="M1 6h3l4-4v12l-4-4H1zM10.5 5.5q2 2.5 0 5M12.5 3.5q3.5 4.5 0 9" /></svg>
      </Pair>
      <Pair>
        <Clock>10:51 AM<br />2/4/2026</Clock>
        <svg viewBox="0 0 16 16"><path d="M2 12l2-3V6c0-5 8-5 8 0v3l2 3zM6 13h4l-2 2z" fill="#2c2c2c" /><path d="M10 1h4l-4 4h4" fill="none" stroke="#2c2c2c" /></svg>
      </Pair>
    </TrayIcons>
  </Taskbar>
);

export default function App() {
  return (
    <Screen>
      <Page />
      <Defs />
      <Desktop>
        <RhinoWindow />
        <HopperWindow />
        <BehindEdge>
          {["#7ab84c", "#555", "#7c84c4", "#b04848", "#666", "#b84c4c"].map((c, i) => <EdgeChip key={i} $color={c} />)}
        </BehindEdge>
      </Desktop>
      <TaskbarView />
    </Screen>
  );
}
